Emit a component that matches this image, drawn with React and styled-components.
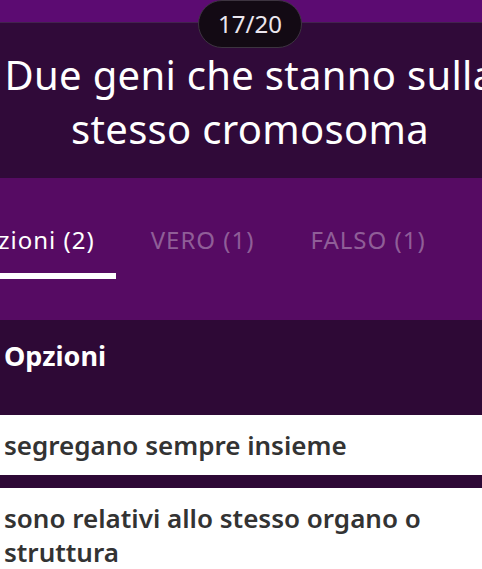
import React, { useState } from "react";
import styled, { createGlobalStyle } from "styled-components";

const GlobalStyle = createGlobalStyle`
    html, body {
        margin: 0;
        padding: 0;
        overflow: hidden;
        background: #ffffff;
    }
    body {
        font-family: 'Noto Sans', 'DejaVu Sans', sans-serif;
    }
`;

const Page = styled.div`
    width: 500px;
    display: flex;
    flex-direction: column;
`;

const QuestionHeader = styled.header`
    display: flex;
    flex-direction: column;
    align-items: center;
    padding-bottom: 22px;
    background: linear-gradient(
        to bottom,
        #5c0b72 0,
        #5c0b72 22px,
        #42234d 22px,
        #42234d 23px,
        #300a39 23px
    );
`;

const Counter = styled.div`
    display: flex;
    align-items: center;
    justify-content: center;
    box-sizing: border-box;
    width: 104px;
    height: 48px;
    border-radius: 24px;
    background-color: #130a14;
    border: 1px solid #3d3440;
    color: #ebe6ee;
    font-size: 24px;
    line-height: 1;
`;

const Title = styled.h1`
    margin: 0;
    width: 100%;
    text-align: center;
    color: #ffffff;
    font-size: 40px;
    font-weight: 400;
    letter-spacing: 0.3px;
    line-height: 54px;
`;

const TabsBar = styled.nav`
    display: flex;
    gap: 14px;
    padding: 47px 0 41px;
    margin-left: -58px;
    background-color: #560b63;
`;

const Tab = styled.button`
    flex: none;
    padding: 0 21px 18px;
    border: none;
    border-bottom: 6px solid ${(props) => (props.active ? "#ffffff" : "transparent")};
    background: none;
    color: ${(props) => (props.active ? "#ffffff" : "rgba(255, 255, 255, 0.35)")};
    font-family: inherit;
    font-size: 24px;
    letter-spacing: 1px;
    line-height: 30px;
    cursor: pointer;
`;

const SectionTitle = styled.h2`
    margin: 0;
    padding: 18px 4px 41px;
    background-color: #2e0936;
    color: #ffffff;
    font-size: 27px;
    font-weight: 700;
    line-height: 36px;
`;

const OptionList = styled.ul`
    list-style: none;
    margin: 0;
    padding: 0;
    display: flex;
    flex-direction: column;
    gap: 13px;
    background-color: #2e0936;
`;

const Option = styled.li`
    padding: 13px 4px;
    background-color: #ffffff;
    color: #333333;
    font-size: 26px;
    font-weight: 600;
    line-height: 34px;
`;

const tabs = [
    { id: "options", label: "Opzioni (2)" },
    { id: "true", label: "VERO (1)" },
    { id: "false", label: "FALSO (1)" },
];

const options = [
    "segregano sempre insieme",
    "sono relativi allo stesso organo o struttura",
];

export default function App() {
    const [activeTab, setActiveTab] = useState("options");

    return (
        <Page>
            <GlobalStyle />
            <QuestionHeader>
                <Counter>17/20</Counter>
                <Title>Due geni che stanno sulla stesso cromosoma</Title>
            </QuestionHeader>
            <TabsBar>
                {tabs.map((tab) => (
                    <Tab
                        key={tab.id}
                        active={activeTab === tab.id}
                        onClick={() => setActiveTab(tab.id)}
                    >
                        {tab.label}
                    </Tab>
                ))}
            </TabsBar>
            <SectionTitle>Opzioni</SectionTitle>
            <OptionList>
                {options.map((text) => (
                    <Option key={text}>{text}</Option>
                ))}
            </OptionList>
        </Page>
    );
}
